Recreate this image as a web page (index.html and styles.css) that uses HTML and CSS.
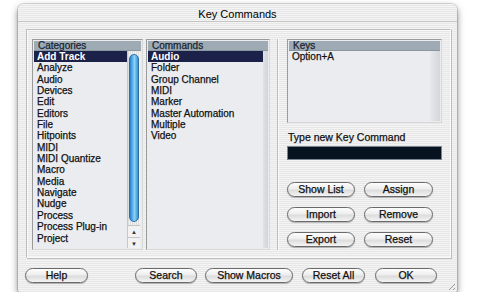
FILE: index.html
```html
<!DOCTYPE html>
<html lang="en">
<head>
	<meta charset="UTF-8">
	<title>Key Commands</title>
	<link rel="stylesheet" href="styles.css">
</head>
<body>
	<div class="window">
		<div class="titlebar">Key Commands</div>
		<div class="group">

			<div class="left">
				<div class="list cats">
					<div class="head">Categories</div>
					<div class="body">
						<div class="items">
							<div class="row sel">Add Track</div>
							<div class="row">Analyze</div>
							<div class="row">Audio</div>
							<div class="row">Devices</div>
							<div class="row">Edit</div>
							<div class="row">Editors</div>
							<div class="row">File</div>
							<div class="row">Hitpoints</div>
							<div class="row">MIDI</div>
							<div class="row">MIDI Quantize</div>
							<div class="row">Macro</div>
							<div class="row">Media</div>
							<div class="row">Navigate</div>
							<div class="row">Nudge</div>
							<div class="row">Process</div>
							<div class="row">Process Plug-in</div>
							<div class="row">Project</div>
						</div>
						<div class="scroll">
							<div class="track"><div class="thumb"></div></div>
							<div class="arrow">&#9650;</div>
							<div class="arrow">&#9660;</div>
						</div>
					</div>
				</div>

				<div class="list cmds">
					<div class="head">Commands</div>
					<div class="body">
						<div class="items">
							<div class="row sel">Audio</div>
							<div class="row">Folder</div>
							<div class="row">Group Channel</div>
							<div class="row">MIDI</div>
							<div class="row">Marker</div>
							<div class="row">Master Automation</div>
							<div class="row">Multiple</div>
							<div class="row">Video</div>
						</div>
						<div class="strip"></div>
					</div>
				</div>
			</div>

			<div class="right">
				<div class="list keys">
					<div class="head">Keys</div>
					<div class="body">
						<div class="items">
							<div class="row">Option+A</div>
						</div>
						<div class="strip"></div>
					</div>
				</div>
				<div class="label">Type new Key Command</div>
				<div class="keyinput"></div>
				<div class="btn-grid">
					<div class="btn">Show List</div>
					<div class="btn">Assign</div>
					<div class="btn">Import</div>
					<div class="btn">Remove</div>
					<div class="btn">Export</div>
					<div class="btn">Reset</div>
				</div>
			</div>

		</div>
		<div class="footer">
			<div class="btn b-help">Help</div>
			<div class="btn b-search">Search</div>
			<div class="btn b-macros">Show Macros</div>
			<div class="btn b-resetall">Reset All</div>
			<div class="btn b-ok">OK</div>
		</div>
		<div class="grip"></div>
	</div>
</body>
</html>
```

FILE: styles.css
```css
*{
	box-sizing: border-box;
	margin: 0;
	padding: 0;
}
body{
	background: #fff;
	font-family: "Liberation Sans", Arial, sans-serif;
	font-size: 10px;
	color: #111;
	-webkit-text-stroke: 0.25px currentColor;
}
.window{
	position: relative;
	width: 439px;
	height: 288px;
	margin: 4px 0 0 18px;
	border-radius: 6px 6px 3px 3px;
	background: repeating-linear-gradient(#f4f4f4 0, #f4f4f4 1px, #e7e7e7 1px, #e7e7e7 2px);
	box-shadow: 0 3px 7px rgba(0,0,0,.5), 0 0 0 1px rgba(0,0,0,.12);
}
.titlebar{
	height: 18px;
	line-height: 20px;
	text-align: center;
	font-size: 11px;
	color: #000;
	border-bottom: 1px solid #c4c4c4;
	-webkit-text-stroke: 0;
}
.group{
	display: flex;
	width: 425px;
	height: 229px;
	margin: 7px 0 0 8px;
	padding: 9px 8px 7px 5px;
	border: 1px solid #bdbdbd;
	border-right-color: #fafafa;
	border-bottom-color: #fafafa;
	box-shadow: inset 1px 1px 0 #fafafa, 1px 1px 0 #bdbdbd;
}
.left{
	display: flex;
	gap: 3px;
	height: 211px;
}
.list{
	display: flex;
	flex-direction: column;
	border: 1px solid #9a9a9a;
	border-right-color: #d8d8d8;
	border-bottom-color: #d8d8d8;
	background: #eaecf0;
	padding: 1px;
}
.head{
	height: 10px;
	line-height: 10px;
	padding-left: 4px;
	background: #9eabb5;
	color: #1a2430;
	border-bottom: 1px solid #8a96a0;
}
.body{
	display: flex;
	flex: 1;
	overflow: hidden;
}
.items{
	flex: 1;
	overflow: hidden;
}
.row{
	height: 11.35px;
	line-height: 11.35px;
	padding-left: 3px;
	white-space: nowrap;
	color: #111;
}
.sel{
	background: #1b2148;
	color: #fff;
	font-weight: bold;
	-webkit-text-stroke: 0;
}
.cats{
	width: 111px;
}
.cmds{
	width: 124px;
}
.scroll{
	width: 13px;
	display: flex;
	flex-direction: column;
	margin-right: 1px;
	background: repeating-linear-gradient(90deg, #dedede 0, #dedede 1px, #f2f2f2 1px, #f2f2f2 2px);
	border-left: 1px solid #c8c8c8;
}
.track{
	flex: 1;
	padding: 3px 1px 3px 1px;
}
.thumb{
	height: 168px;
	border-radius: 6px;
	border: 1px solid #2f6fa8;
	background: linear-gradient(90deg, #2b7fc9 0, #5bb8ee 35%, #8fd2f5 55%, #3590d6 100%);
}
.arrow{
	height: 12px;
	line-height: 12px;
	font-size: 6px;
	text-align: center;
	color: #333;
	background: #f2f2f2;
	border-top: 1px solid #c4c4c4;
	-webkit-text-stroke: 0;
}
.strip{
	width: 5px;
	background: linear-gradient(90deg, #e0e2e6, #d2d4d8);
}
.right{
	display: flex;
	flex-direction: column;
	width: 174px;
	margin-left: 7px;
	padding-left: 8px;
	border-left: 1px solid #bdbdbd;
	box-shadow: inset 1px 0 0 #fafafa;
}
.keys{
	height: 84px;
	margin-left: 1px;
}
.keys .strip{
	width: 10px;
	background: linear-gradient(90deg, #e6e8ec, #d4d6da);
}
.label{
	margin-top: 8px;
	padding-left: 2px;
	font-size: 10.5px;
	color: #111;
}
.keyinput{
	height: 14px;
	margin: 3px 0 0 1px;
	background: #07141f;
	border: 1px solid #7b8590;
}
.btn-grid{
	display: grid;
	grid-template-columns: 68px 69px;
	column-gap: 9px;
	row-gap: 10px;
	margin: 22px 0 0 1px;
}
.btn{
	height: 15px;
	line-height: 13px;
	text-align: center;
	font-size: 10.5px;
	color: #111;
	border: 1px solid #6a6a6a;
	border-radius: 8px;
	background: linear-gradient(#fdfdfd 0, #eeeeee 45%, #dcdcdc 55%, #f4f4f4 100%);
	box-shadow: 0 1px 1px rgba(0,0,0,.25);
}
.footer{
	display: flex;
	margin: 10px 0 0 7px;
}
.b-help{
	width: 63px;
}
.b-search{
	width: 62px;
	margin-left: 47px;
}
.b-macros{
	width: 88px;
	margin-left: 8px;
}
.b-resetall{
	width: 63px;
	margin-left: 9px;
}
.b-ok{
	width: 62px;
	margin-left: 10px;
}
.grip{
	position: absolute;
	right: 2px;
	bottom: 2px;
	width: 9px;
	height: 9px;
	background: repeating-linear-gradient(135deg, transparent 0, transparent 2px, #9a9a9a 2px, #9a9a9a 3px);
	clip-path: polygon(100% 0, 100% 100%, 0 100%);
}
```
